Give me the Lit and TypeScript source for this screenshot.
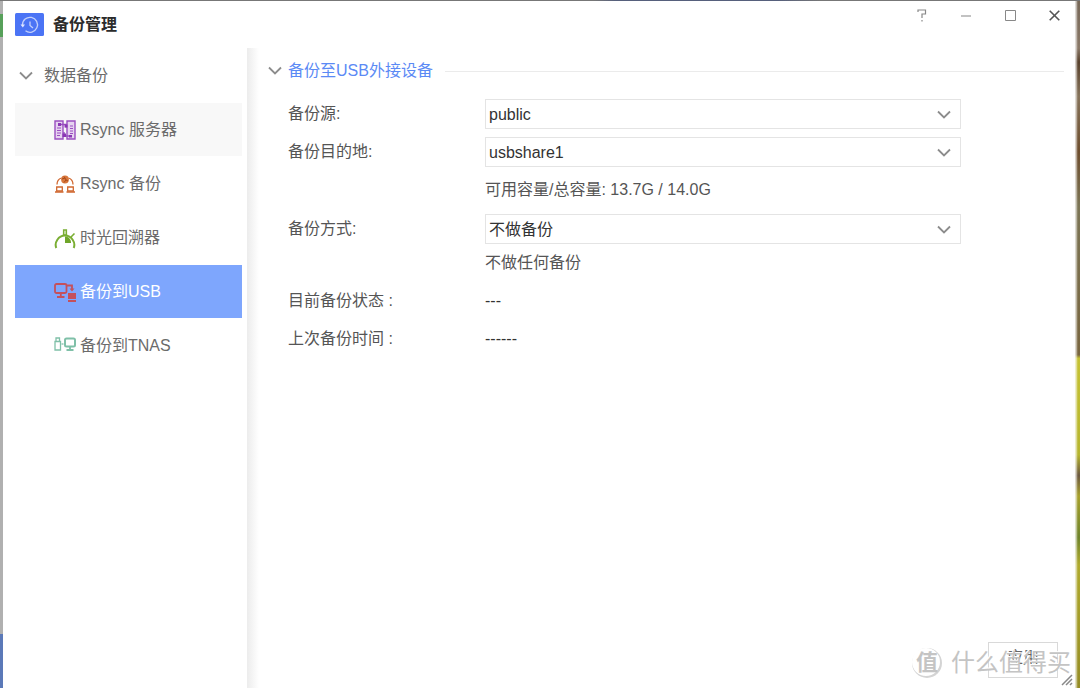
import { LitElement, html, css, svg } from "lit";
import { customElement, property, state } from "lit/decorators.js";

const icons: Record<string, unknown> = {
  server: svg`
    <g fill="none" stroke="#9a4fc0" stroke-width="1.4">
      <path d="M1 2h8v18H1zM13 2h8v18h-8z" fill="#e6d3f0"/>
      <path d="M3 9h4M3 11.5h4M3 14h4M3 16.5h3M16 7h3M16 9.500h3M16 12h3M16 14.500h3" stroke-width="1"/>
      <path d="M5 5.500h7v3M17 17h-7v-4"/>
    </g>
    <path fill="#8a38b4" d="M4 4h3v3H4zM10.500 5.500h3v3h-3zM8.500 14.500h3.500v3.500H8.500zM15 16h3v2.500h-3z"/>`,
  rsync: svg`
    <g fill="none" stroke="#d0672f" stroke-width="1.300">
      <path d="M2.700 14h5.600v4H2.700zM13.700 14h5.600v4h-5.600z"/>
      <path d="M1 19h8.500M12.500 19h8.500" stroke-width="1.600"/>
      <path d="M3 11.500c0-3.500 1.500-5.500 4.500-6.500M19 11.500c0-3.500-1.500-5.500-4.500-6.500"/>
    </g>
    <circle cx="11" cy="6.500" r="3.900" fill="#d9783c"/>
    <path d="M8 6l3-1 1 2 2 1M10 3.500l1 1.500M10 9.500l2-2.500" stroke="#a84a1c" fill="none"/>`,
  time: svg`
    <path d="M2.300 21C0 15.500 4.500 8.500 11 8.500s11 7 8.700 12.500" fill="none" stroke="#7aae33" stroke-width="2"/>
    <path d="M11 9.500c3.500 0 6 2.500 6 6.500h-6z" fill="#6fa529"/>
    <path d="M9.700 3h2.600v5H9.700zM17 10l3.500-3.500" fill="none" stroke="#7aae33" stroke-width="1.600"/>`,
  usb: svg`
    <g fill="none" stroke="#c4505c" stroke-width="1.800">
      <rect x="1" y="3" width="11.500" height="9" rx="1.500"/>
      <path d="M6.800 12v3.500M3 16h7.500M13 4.500h5V9"/>
    </g>
    <path d="M15.500 7.500h5L18 10.500zM14 12h8v6h-8zM14 19h8v2h-8z" fill="#c4505c"/>`,
  tnas: svg`
    <g fill="none" stroke="#7fc0a8" stroke-width="1.300">
      <path d="M1 6.500h5.500V15H1zM2 3h3.500v3.500H2z"/>
      <path d="M7.500 9h2"/>
      <rect x="11" y="3.500" width="10" height="8" rx="1.500" stroke-width="2"/>
      <path d="M16 12v2.500M12.500 15h7" stroke-width="1.800"/>
    </g>`,
};

const chevron = html`<svg class="chevron" width="14" height="10" viewBox="0 0 14 10" aria-hidden="true">
  <path d="M1 1.500l6 6 6-6" fill="none" stroke="currentColor" stroke-width="1.800"/>
</svg>`;

const base = css`
  * { box-sizing: border-box; }
  button, select {
    font: inherit;
    color: inherit;
    margin: 0;
    padding: 0;
    border: 0;
    background: none;
    border-radius: 0;
  }
  button { cursor: pointer; }
  svg { display: block; flex: none; }
`;

@customElement("window-bar")
class WindowBar extends LitElement {
  static styles = [base, css`
    :host { display: flex; align-items: flex-start; height: 47px; padding: 0 0 0 12px; }
    .brand { display: flex; align-items: center; gap: 9px; padding-top: 12px; }
    h1 { margin: 0; font-size: 16px; line-height: 24px; font-weight: 700; color: #2b2b2b; }
    .controls { display: flex; margin: 0 -1px 0 auto; }
    .controls button { display: grid; place-items: center; width: 44px; height: 28px; color: #777; }
  `];

  render() {
    return html`
      <div class="brand">
        <svg width="29" height="24" viewBox="0 0 29 24" aria-hidden="true">
          <rect width="29" height="23" rx="1.500" fill="#4b74f5"/>
          <g fill="none" stroke="#c3d0fb" stroke-width="1.300">
            <path d="M7.500 12a7.500 7.500 0 1 1 3 5.800"/>
            <path d="M15 8.500v4l3 2.500"/>
          </g>
          <path d="M5.500 11.500h4.500l-2.200 3z" fill="#dfe6ff"/>
        </svg>
        <h1>备份管理</h1>
      </div>
      <div class="controls">
        <button aria-label="帮助"><svg width="10" height="13" viewBox="0 0 10 13"><path d="M1 3V1h7.500v4H5v4M5 11v1.500" fill="none" stroke="#888" stroke-width="1.200"/></svg></button>
        <button aria-label="最小化"><svg width="11" height="11" viewBox="0 0 11 11"><path d="M0 6h10" stroke="#999" stroke-width="1.200"/></svg></button>
        <button aria-label="最大化"><svg width="11" height="11" viewBox="0 0 11 11"><path d="M.5.5h10v10H.5z" fill="none" stroke="#888"/></svg></button>
        <button aria-label="关闭"><svg width="11" height="11" viewBox="0 0 11 11"><path d="M.7.700l9.600 9.600M10.300.700L.7 10.300" stroke="#555" stroke-width="1.600"/></svg></button>
      </div>`;
  }
}

@customElement("side-nav")
class SideNav extends LitElement {
  @property() active = "usb";
  private items = [
    { id: "server", label: "Rsync 服务器", hover: true },
    { id: "rsync", label: "Rsync 备份" },
    { id: "time", label: "时光回溯器" },
    { id: "usb", label: "备份到USB" },
    { id: "tnas", label: "备份到TNAS" },
  ];

  static styles = [base, css`
    :host { display: block; padding: 12px 5px 0 12px; color: #6b6b6b; }
    .group { display: flex; align-items: center; gap: 11px; height: 32px; padding-left: 4px; margin-bottom: 11px; }
    .chevron { color: #8c8c8c; }
    nav { display: grid; gap: 1px; }
    a {
      display: flex;
      align-items: center;
      gap: 4px;
      height: 53px;
      padding-left: 39px;
      color: #6b6b6b;
      text-decoration: none;
    }
    .hover { background: #f8f8f8; }
    .active { background: #7ea6fd; color: #fff; }
  `];

  render() {
    return html`
      <button class="group" aria-expanded="true">${chevron}<span>数据备份</span></button>
      <nav>
        ${this.items.map((i) => html`
          <a href="#${i.id}" class="${i.id === this.active ? "active" : i.hover ? "hover" : ""}">
            <svg width="22" height="22" viewBox="0 0 22 22" aria-hidden="true">${icons[i.id]}</svg>
            <span>${i.label}</span>
          </a>`)}
      </nav>`;
  }
}

@customElement("usb-backup")
class UsbBackup extends LitElement {
  static styles = [base, css`
    :host { display: flex; flex-direction: column; padding: 8px 11px 11px 21px; color: #555; }
    .heading { display: flex; align-items: center; gap: 12px; height: 30px; }
    .heading button { display: flex; align-items: center; gap: 6px; color: #5b8af5; }
    .heading .chevron { color: #8c8c8c; }
    .rule { flex: 1; height: 1px; background: #ebebeb; }
    form { display: flex; flex-direction: column; flex: 1; padding-top: 13px; }
    .rows { display: grid; gap: 8px; padding-left: 20px; }
    .row { display: grid; grid-template-columns: 197px minmax(0, 476px); line-height: 30px; }
    .field { position: relative; color: #333; }
    .field select {
      appearance: none;
      display: block;
      width: 100%;
      height: 30px;
      padding: 0 36px 0 3px;
      border: 1px solid #e4e4e4;
      background: #fff;
    }
    .field .chevron { position: absolute; right: 10px; top: 11px; color: #8c8c8c; pointer-events: none; }
    .info { grid-column: 2; color: #555; }
    .capacity { padding-bottom: 1px; }
    .hint { padding-top: 4px; }
    output { color: #333; }
    footer { display: flex; justify-content: flex-end; margin-top: auto; padding-right: 6px; }
    footer button { width: 70px; height: 36px; padding-bottom: 4px; border: 1px solid #d9d9d9; color: #666; }
  `];

  private select(id: string, value: string) {
    return html`<div class="field"><select id=${id}><option>${value}</option></select>${chevron}</div>`;
  }

  render() {
    return html`
      <div class="heading">
        <button aria-expanded="true">${chevron}<span>备份至USB外接设备</span></button>
        <span class="rule"></span>
      </div>
      <form>
        <div class="rows">
          <div class="row"><label for="source">备份源:</label>${this.select("source", "public")}</div>
          <div class="row"><label for="target">备份目的地:</label>${this.select("target", "usbshare1")}</div>
          <div class="row"><span class="info capacity">可用容量/总容量: 13.7G / 14.0G</span></div>
          <div class="row">
            <label for="mode">备份方式:</label>${this.select("mode", "不做备份")}
            <span class="info hint">不做任何备份</span>
          </div>
          <div class="row"><label for="status">目前备份状态 :</label><output id="status">---</output></div>
          <div class="row"><label for="last">上次备份时间 :</label><output id="last">------</output></div>
        </div>
        <footer><button type="button">应用</button></footer>
      </form>`;
  }
}

@customElement("app-root")
class AppRoot extends LitElement {
  @state() private page = "usb";

  static styles = [base, css`
    :host {
      display: block;
      position: relative;
      height: 100vh;
      padding: 1px 5px 0 3px;
      font: 16px/24px "Liberation Sans", "Noto Sans CJK SC", sans-serif;
      background:
        linear-gradient(90deg, #777 0 55%, #56607c 57% 72%, #777 76%) top / 100% 1px no-repeat,
        linear-gradient(90deg, rgba(255,255,255,.75) 0 1px, rgba(255,255,255,.25) 2px, transparent 3px) right / 5px 100% no-repeat,
        linear-gradient(#766757 0, #8a7968 7%, #59422d 9%, #86735a 14%, #6e4e2e 22%, #7c7555 30%, #79663f 51.500%, #c6c233 52%, #b6b52f 66%, #6d5940 69%, #a8a12c 72%, #6f842b 78%, #b0aa2d 82%, #958c25 100%) right / 5px 100% no-repeat,
        linear-gradient(#b0b0b0 0 2%, #57a05a 2% 5.400%, #b0b0b0 5.400% 92%, #5b79b8 92%) left / 3px 100% no-repeat;
    }
    .window { display: grid; grid-template-rows: auto 1fr; height: 100%; background: #fff; }
    .body { display: grid; grid-template-columns: 244px minmax(0, 1fr); }
    usb-backup { background: linear-gradient(90deg, #ececec, #fff 12px); }
    .watermark {
      position: absolute;
      right: 9px;
      bottom: 10px;
      display: flex;
      align-items: center;
      gap: 9px;
      color: #c4c4c4;
      font-size: 24px;
      line-height: 32px;
      pointer-events: none;
      text-shadow: -1px -1px 0 #fff;
    }
    .seal {
      display: flex;
      align-items: center;
      justify-content: center;
      width: 30px;
      height: 30px;
      border-radius: 50%;
      box-shadow: inset -1px -1px 0 1px #d4d4d4;
      font-size: 22px;
      font-weight: 700;
    }
    .grip { position: absolute; right: 7px; bottom: 3px; }
  `];

  render() {
    return html`
      <div class="window">
        <window-bar></window-bar>
        <div class="body">
          <side-nav .active=${this.page}></side-nav>
          <usb-backup></usb-backup>
        </div>
      </div>
      <div class="watermark"><span class="seal">值</span><span>什么值得买</span></div>
      <svg class="grip" width="12" height="12" viewBox="0 0 12 12" aria-hidden="true">
        <path d="M1 11L11 1M5 11l6-6M9 11l2-2" stroke="#888" stroke-width="1.500"/>
      </svg>`;
  }
}
